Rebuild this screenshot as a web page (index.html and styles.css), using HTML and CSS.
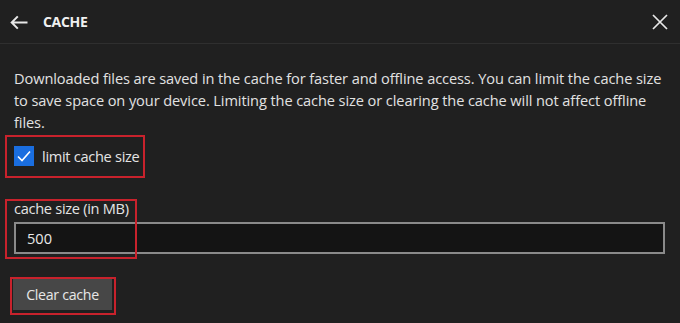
FILE: index.html
```html
<!DOCTYPE html>
<html>
<head>
<meta charset="utf-8">
<link rel="stylesheet" href="styles.css">
</head>
<body>
<div class="panel">
  <header class="header">
    <svg class="back" width="18" height="15" viewBox="0 0 18 15"><path d="M17.5 7.5H2M7.8 1.4L1.7 7.5l6.1 6.1" fill="none" stroke="#e8e8e8" stroke-width="2"/></svg>
    <h1 class="title">CACHE</h1>
    <svg class="close" width="16" height="16" viewBox="0 0 16 16"><path d="M1 1L15 15M15 1L1 15" fill="none" stroke="#e8e8e8" stroke-width="1.7"/></svg>
  </header>
  <main class="content">
    <p class="desc">Downloaded files are saved in the cache for faster and offline access. You can limit the cache size to save space on your device. Limiting the cache size or clearing the cache will not affect offline files.</p>
    <label class="check-row">
      <span class="checkbox"><svg width="14" height="12" viewBox="0 0 14 12"><path d="M1 6.5l4 4L13 1.5" fill="none" stroke="#fff" stroke-width="1.6"/></svg></span>
      <span class="check-label">limit cache size</span>
    </label>
    <div class="field">
      <div class="field-label">cache size (in MB)</div>
      <div class="input">500</div>
    </div>
    <button class="btn">Clear cache</button>
    <div class="mark mark-check"></div>
    <div class="mark mark-field"></div>
    <div class="mark mark-btn"></div>
  </main>
</div>
</body>
</html>
```
FILE: styles.css
```css
* { box-sizing: border-box; }
html, body { margin: 0; padding: 0; background: #202020; }
body {
  font-family: "Open Sans", "Noto Sans", sans-serif;
  color: #e4e4e4;
  width: 680px;
  height: 323px;
  overflow: hidden;
}
.header {
  height: 44px;
  display: flex;
  align-items: center;
  border-bottom: 1px solid #2f2f2f;
  padding: 0 12px 0 10px;
}
.back { margin-right: 15px; margin-top: 1px; }
.title {
  flex: 1;
  margin: 0;
  font-size: 14px;
  font-weight: 700;
  color: #f0f0f0;
  letter-spacing: -0.3px;
}
.close { margin-top: 1px; }
.content {
  position: relative;
  padding: 23px 14px 0 14px;
}
.desc {
  margin: 0;
  font-size: 14.6px;
  line-height: 22px;
  color: #e2e2e2;
  letter-spacing: -0.1px;
}
.check-row {
  display: flex;
  align-items: center;
  gap: 8px;
  margin-top: 13px;
  height: 20px;
}
.checkbox {
  width: 20px;
  height: 20px;
  background: #1a6ee0;
  display: flex;
  align-items: center;
  justify-content: center;
}
.check-label { font-size: 14.6px; letter-spacing: -0.3px; }
.field { margin-top: 32px; }
.field-label { font-size: 14.6px; line-height: 20px; letter-spacing: -0.3px; }
.input {
  margin-top: 4px;
  width: 651px;
  height: 32px;
  border: 2px solid #8a8a8a;
  background: #141414;
  padding: 0 11px;
  font-size: 14.6px;
  line-height: 28px;
  color: #eaeaea;
}
.btn {
  display: block;
  margin-top: 24px;
  margin-left: -1px;
  width: 99px;
  height: 32px;
  border: 0;
  background: #474747;
  color: #e8e8e8;
  font-family: inherit;
  font-size: 14.2px;
  letter-spacing: -0.3px;
  padding: 0;
}
.mark {
  position: absolute;
  border: 2px solid #c8222c;
}
.mark-check { left: 5px; top: 91px; width: 140px; height: 43px; }
.mark-field { left: 5px; top: 155px; width: 132px; height: 60px; }
.mark-btn { left: 10px; top: 233px; width: 106px; height: 38px; }
```
